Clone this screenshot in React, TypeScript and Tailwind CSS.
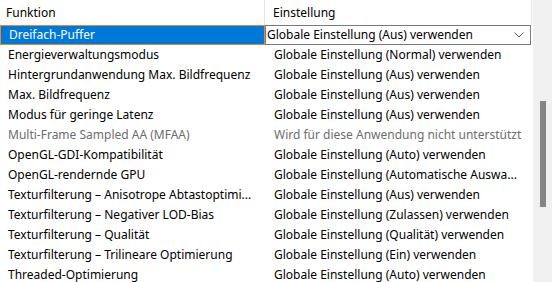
const rows: { name: string; value: string; disabled?: boolean }[] = [
  { name: 'Energieverwaltungsmodus', value: 'Globale Einstellung (Normal) verwenden' },
  { name: 'Hintergrundanwendung Max. Bildfrequenz', value: 'Globale Einstellung (Aus) verwenden' },
  { name: 'Max. Bildfrequenz', value: 'Globale Einstellung (Aus) verwenden' },
  { name: 'Modus für geringe Latenz', value: 'Globale Einstellung (Aus) verwenden' },
  { name: 'Multi-Frame Sampled AA (MFAA)', value: 'Wird für diese Anwendung nicht unterstützt', disabled: true },
  { name: 'OpenGL-GDI-Kompatibilität', value: 'Globale Einstellung (Auto) verwenden' },
  { name: 'OpenGL-rendernde GPU', value: 'Globale Einstellung (Automatische Auswa...' },
  { name: 'Texturfilterung – Anisotrope Abtastoptimi...', value: 'Globale Einstellung (Aus) verwenden' },
  { name: 'Texturfilterung – Negativer LOD-Bias', value: 'Globale Einstellung (Zulassen) verwenden' },
  { name: 'Texturfilterung – Qualität', value: 'Globale Einstellung (Qualität) verwenden' },
  { name: 'Texturfilterung – Trilineare Optimierung', value: 'Globale Einstellung (Ein) verwenden' },
  { name: 'Threaded-Optimierung', value: 'Globale Einstellung (Auto) verwenden' },
]

export default function App() {
  return (
    <div className="w-[552px] h-[282px] flex overflow-hidden bg-white text-[12px] leading-[16px] text-black font-['Noto_Sans',sans-serif]">
      {/* Liste */}
      <div className="w-[533px] flex flex-col">
        {/* Kopfzeile */}
        <div className="flex h-[25px] shrink-0">
          <div className="w-[265px] pl-[6px] flex items-center border-r border-[#e5e5e5]">Funktion</div>
          <div className="w-[267px] pl-[8px] flex items-center border-r border-[#e5e5e5]">Einstellung</div>
        </div>

        {/* ausgewählte Zeile */}
        <div className="flex h-[20px] shrink-0">
          <div className="w-[265px] pl-[8px] flex items-center bg-[#0078d7] text-white border border-[#f0862b]">
            Dreifach-Puffer
          </div>
          <div className="w-[266px] pl-[1px] pr-[6px] flex items-center justify-between border border-[#7a7a7a]">
            <span>Globale Einstellung (Aus) verwenden</span>
            <svg width="10" height="6" viewBox="0 0 10 6" fill="none" stroke="#555" strokeWidth="1">
              <path d="M0.5 0.5 L5 5 L9.5 0.5" />
            </svg>
          </div>
        </div>

        {rows.map((r) => (
          <div key={r.name} className={`flex h-[20px] shrink-0 ${r.disabled ? 'text-[#6d6d6d]' : ''}`}>
            <div className="w-[265px] pl-[8px] flex items-center whitespace-nowrap overflow-hidden">{r.name}</div>
            <div className="pl-[9px] flex items-center whitespace-nowrap">{r.value}</div>
          </div>
        ))}
      </div>

      {/* Scrollleiste */}
      <div className="w-[19px] bg-[#f0f0f0] flex justify-center pt-[101px]">
        <div className="w-[6px] h-[106px] bg-[#858585]" />
      </div>
    </div>
  )
}
